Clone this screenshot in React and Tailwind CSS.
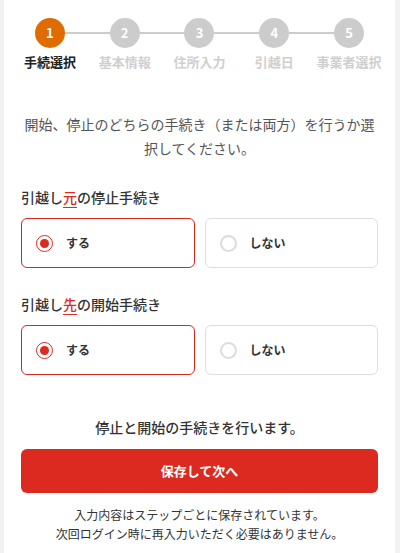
import React from "react";

const steps = ["手続選択", "基本情報", "住所入力", "引越日", "事業者選択"];

function Radio({ checked }) {
  return checked ? (
    <span className="flex h-[17px] w-[17px] items-center justify-center rounded-full border-[1.5px] border-[#dc2a20]">
      <span className="h-[9px] w-[9px] rounded-full bg-[#dc2a20]" />
    </span>
  ) : (
    <span className="h-[17px] w-[17px] rounded-full border-[2px] border-[#dcdcdc]" />
  );
}

function Option({ label, checked }) {
  return (
    <div
      className={
        checked
          ? "flex h-[50px] items-center gap-[13px] rounded-[6px] border border-[#d5281e] bg-white pl-[14px]"
          : "flex h-[50px] items-center gap-[13px] rounded-[6px] border border-[#dedede] bg-white pl-[14px]"
      }
    >
      <Radio checked={checked} />
      <span className="text-[12px] font-bold text-[#333]">{label}</span>
    </div>
  );
}

function Section({ pre, mark, post }) {
  return (
    <div>
      <h2 className="text-[14px] leading-[20px] font-medium text-[#333]">
        {pre}
        <span className="border-b border-[#dc2a20] text-[#dc2a20]">{mark}</span>
        {post}
      </h2>
      <div className="mt-[11px] grid grid-cols-2 gap-[10px]">
        <Option label="する" checked />
        <Option label="しない" />
      </div>
    </div>
  );
}

export default function App() {
  return (
    <div
      className="flex h-[553px] w-[400px] bg-[#f1f3f3] pl-[4px] pr-[5px]"
      style={{ fontFamily: '"Noto Sans CJK JP", "Noto Sans", sans-serif' }}
    >
      <div className="flex-1 bg-white px-[17px]">
        <div className="mx-[-8.5px] grid grid-cols-5 pt-[18px]">
          {steps.map((s, i) => (
            <div key={s} className="relative flex flex-col items-center">
              {i > 0 && (
                <div className="absolute left-[-50%] right-[50%] top-[14px] h-[2px] bg-[#cccccc]" />
              )}
              <div
                className={
                  i === 0
                    ? "relative z-10 flex h-[30px] w-[30px] items-center justify-center rounded-full bg-[#e06c00] text-[13px] font-bold text-white"
                    : "relative z-10 flex h-[30px] w-[30px] items-center justify-center rounded-full bg-[#cccccc] text-[13px] font-bold text-white"
                }
              >
                {i + 1}
              </div>
              <div
                className={
                  i === 0
                    ? "mt-[5px] whitespace-nowrap text-[13px] leading-[17px] font-bold text-[#222]"
                    : "mt-[5px] whitespace-nowrap text-[13px] leading-[17px] font-bold text-[#cfcfcf]"
                }
              >
                {s}
              </div>
            </div>
          ))}
        </div>

        <p className="mt-[42px] text-center text-[14px] leading-[24px] text-[#555]">
          開始、停止のどちらの手続き（または両方）を行うか選択してください。
        </p>

        <div className="mt-[27px]">
          <Section pre="引越し" mark="元" post="の停止手続き" />
        </div>
        <div className="mt-[26px]">
          <Section pre="引越し" mark="先" post="の開始手続き" />
        </div>

        <p className="mt-[42px] text-center text-[14px] leading-[20px] font-medium text-[#333]">
          停止と開始の手続きを行います。
        </p>

        <button className="mt-[12px] flex h-[44px] w-full items-center justify-center rounded-[6px] bg-[#dc2a20] text-[13px] font-bold text-white">
          保存して次へ
        </button>

        <p className="mt-[12px] text-center text-[12px] leading-[19px] text-[#333]">
          入力内容はステップごとに保存されています。
          <br />
          次回ログイン時に再入力いただく必要はありません。
        </p>
      </div>
    </div>
  );
}
